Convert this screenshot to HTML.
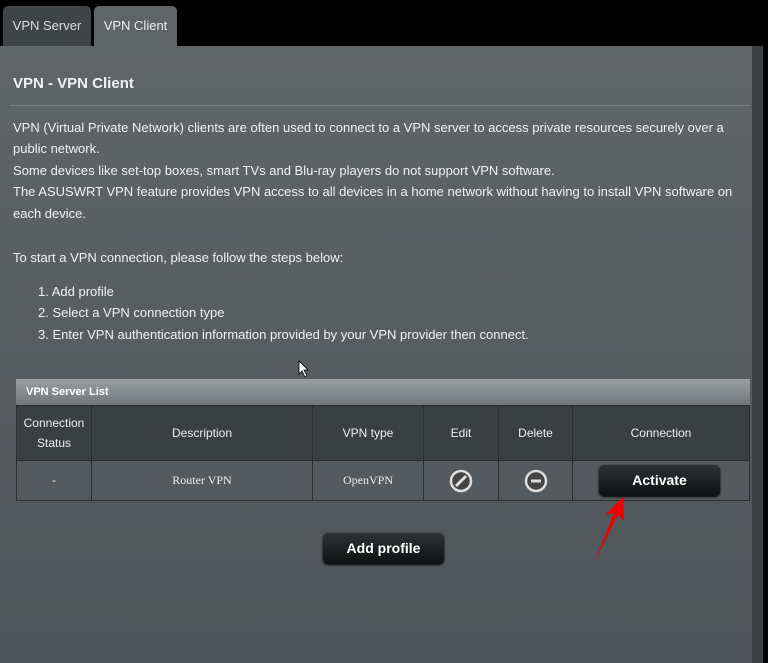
<!DOCTYPE html>
<html><head><style>
body{margin:0;width:768px;height:663px;background:#000;position:relative;overflow:hidden;font-family:"Liberation Sans",sans-serif;color:#fff}
.tab{position:absolute;top:6px;height:42px;border-radius:5px 5px 0 0;font-size:13px;line-height:40px;text-align:center}
#panel{position:absolute;left:0;top:46px;width:752px;height:617px;background:linear-gradient(#606568,#4e5457)}
#strip{position:absolute;left:752px;top:46px;width:11px;height:617px;background:#3c4143}
.t{position:absolute;font-size:13px;color:#f2f2f2;white-space:nowrap}
table{position:absolute;left:16px;top:405px;width:734px;border-collapse:collapse;font-size:12px;table-layout:fixed}
td{border:1px solid #2a2e30;text-align:center;color:#eee;padding:0}
.btn{position:absolute;background:linear-gradient(#2e3234,#0f1112);border-radius:5px;font-weight:bold;font-size:14px;text-align:center;color:#fff;box-shadow:0 1px 2px #000}
</style></head><body>
<div class="tab" style="left:3px;width:88px;background:#3f4446;color:#ddd">VPN Server</div>
<div class="tab" style="left:94px;width:83px;background:#5f6467;color:#eee">VPN Client</div>
<div id="panel"></div><div id="strip"></div>
<div class="t" style="left:13px;top:75px;font-size:15px;font-weight:bold">VPN - VPN Client</div>
<div style="position:absolute;left:10px;top:105px;width:740px;height:1px;background:#777c7f"></div>
<div class="t" style="left:13px;top:120px">VPN (Virtual Private Network) clients are often used to connect to a VPN server to access private resources securely over a</div>
<div class="t" style="left:13px;top:141px">public network.</div>
<div class="t" style="left:13px;top:163px">Some devices like set-top boxes, smart TVs and Blu-ray players do not support VPN software.</div>
<div class="t" style="left:13px;top:184px">The ASUSWRT VPN feature provides VPN access to all devices in a home network without having to install VPN software on</div>
<div class="t" style="left:13px;top:206px">each device.</div>
<div class="t" style="left:13px;top:250px">To start a VPN connection, please follow the steps below:</div>
<div class="t" style="left:38px;top:284px">1. Add profile</div>
<div class="t" style="left:38px;top:305px">2. Select a VPN connection type</div>
<div class="t" style="left:38px;top:327px">3. Enter VPN authentication information provided by your VPN provider then connect.</div>
<div style="position:absolute;left:16px;top:379px;width:734px;height:26px;background:linear-gradient(#9a9fa2,#70767a);font-size:11px;font-weight:bold;line-height:26px;text-indent:10px">VPN Server List</div>
<table>
<tr style="height:55px;background:#3a3f42"><td style="width:74px;line-height:20px">Connection<br>Status</td><td style="width:220px">Description</td><td style="width:110px">VPN type</td><td style="width:74px">Edit</td><td style="width:73px">Delete</td><td>Connection</td></tr>
<tr style="height:40px;background:#545a5d;font-family:'Liberation Serif',serif"><td>-</td><td>Router VPN</td><td>OpenVPN</td>
<td><svg width="26" height="26" viewBox="0 0 26 26" style="vertical-align:middle"><circle cx="13" cy="13" r="10" fill="#444" stroke="#ddd" stroke-width="2.5"/><path d="M8 18L18 8" stroke="#ddd" stroke-width="3"/></svg></td>
<td><svg width="26" height="26" viewBox="0 0 26 26" style="vertical-align:middle"><circle cx="13" cy="13" r="10" fill="#444" stroke="#ddd" stroke-width="2.5"/><path d="M8 13H18" stroke="#ddd" stroke-width="3"/></svg></td>
<td></td></tr></table>
<div class="btn" style="left:599px;top:465px;width:121px;height:31px;line-height:31px">Activate</div>
<div class="btn" style="left:323px;top:533px;width:121px;height:31px;line-height:31px">Add profile</div>
<svg style="position:absolute;left:590px;top:495px" width="40" height="70"><path d="M5 66L24 18L15 20L33 2L34 26L28 20Z" fill="#e00"/></svg>
<svg style="position:absolute;left:298px;top:360px" width="12" height="18"><path d="M1 1L1 14L4 11L7 17L9 16L6 10L10 10Z" fill="#fff" stroke="#000" stroke-width="0.8"/></svg>
</body></html>
